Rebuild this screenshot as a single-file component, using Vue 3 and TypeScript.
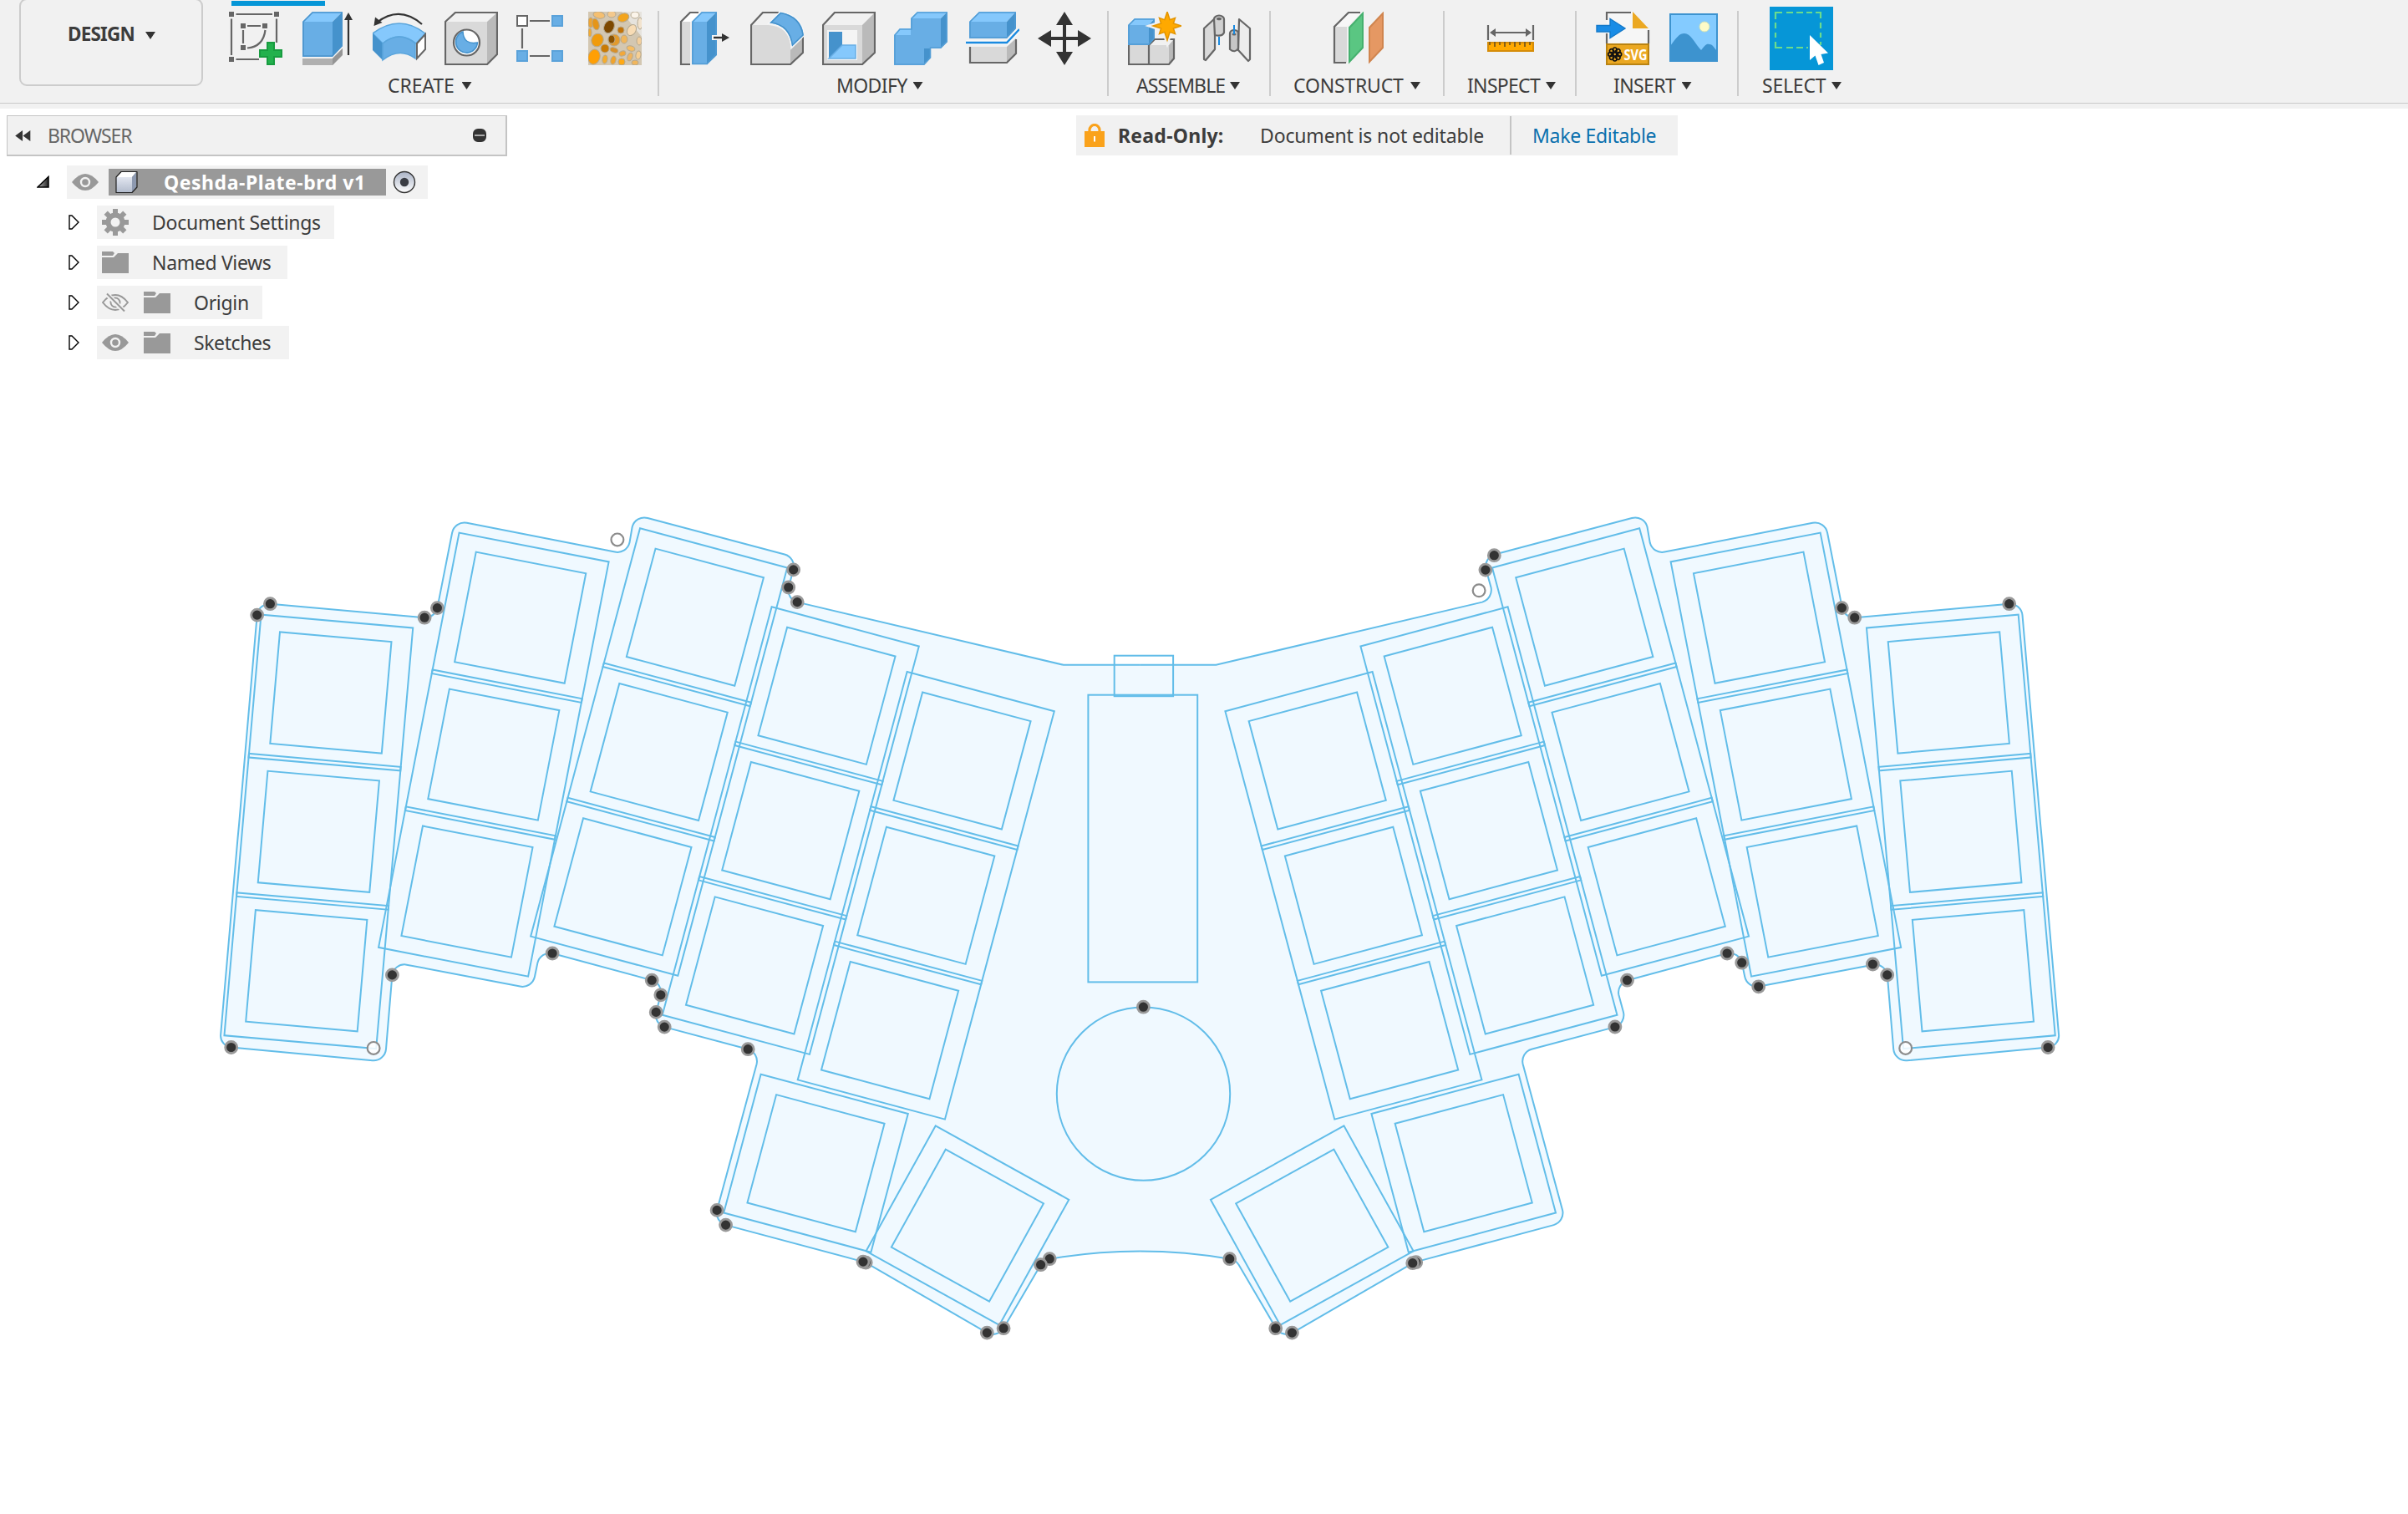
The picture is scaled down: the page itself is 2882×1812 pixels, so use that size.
<script setup lang="ts">
interface Label { text: string; cls: string }
interface Column { x: number; y: number; angle: number; count: number }
interface Key { x: number; y: number; angle: number }
type Point = [number, number]

const labels: Record<string, Label> = {
  create: { text: 'CREATE', cls: 'lb-create' },
  modify: { text: 'MODIFY', cls: 'lb-modify' },
  assemble: { text: 'ASSEMBLE', cls: 'lb-assemble' },
  construct: { text: 'CONSTRUCT', cls: 'lb-construct' },
  inspect: { text: 'INSPECT', cls: 'lb-inspect' },
  insert: { text: 'INSERT', cls: 'lb-insert' },
  select: { text: 'SELECT', cls: 'lb-select' },
}

/* Sketch geometry: the left half is described, the right half is its mirror. */
const AXIS = 1363.7
const PITCH = 167
const columns: Column[] = [
  { x: 395.5, y: 828.6, angle: 5, count: 3 },
  { x: 622.3, y: 738.8, angle: 11, count: 3 },
  { x: 831.5, y: 738.3, angle: 15, count: 3 },
  { x: 989.1, y: 832.4, angle: 15, count: 3 },
  { x: 1151.1, y: 910.1, angle: 15, count: 3 },
  { x: 976.1, y: 1391.8, angle: 15, count: 1 },
  { x: 1157.5, y: 1466.2, angle: 29, count: 1 },
]
const keys: Key[] = columns.flatMap((c) =>
  Array.from({ length: c.count }, (_, i) => {
    const a = (c.angle * Math.PI) / 180
    return { x: c.x - Math.sin(a) * PITCH * i, y: c.y + Math.cos(a) * PITCH * i, angle: c.angle }
  }),
)

const half = [
  'M1363.7 795.4 L1272.4 795.4 L953.8 720.2 A15 15 0 0 1 943.3 702.6 L949.2 681.5',
  'A15 15 0 0 0 938.6 663.1 L774.7 619.6 A15 15 0 0 0 756.3 630.1 L753 649.4',
  'A15 15 0 0 1 735.6 660.2 L558.3 625.4 A15 15 0 0 0 540.7 637.3 L523 727.2',
  'A15 15 0 0 1 507.7 738.8 L323 722.3 A15 15 0 0 0 307.3 735.7 L285.7 986 L284 1004',
  'L263.7 1238.4 A14 14 0 0 0 276.3 1253.1 L445.4 1268.9 A15 15 0 0 0 461.6 1255.3',
  'L469 1166.5 A15 15 0 0 1 485 1154 L622 1180.2 A15 15 0 0 0 639.6 1168.4 L643 1152',
  'A15 15 0 0 1 660.7 1140.6 L779.8 1172.8 A15 15 0 0 1 790.4 1190.4 L784.8 1211',
  'A15 15 0 0 0 794.8 1228.7 L894.8 1255.3 A15 15 0 0 1 905.2 1273 L857.7 1448',
  'A15 15 0 0 0 868.2 1465.7 L1032.6 1509.7 L1035.8 1510.7 L1180.9 1594.7',
  'A15 15 0 0 0 1200.7 1589.3 L1245.2 1513.3 A15 15 0 0 1 1255.8 1506.3',
  'A632 632 0 0 1 1363.7 1497',
].join(' ')

const dots: Point[] = [
  [323, 722.3], [307.3, 735.7], [507.7, 738.8], [523, 727.2], [949.2, 681.5], [943.3, 702.6],
  [953.8, 720.2], [276.3, 1253.1], [469, 1166.5], [660.7, 1140.6], [779.8, 1172.8],
  [790.4, 1190.4], [784.8, 1211], [794.8, 1228.7], [894.8, 1255.3], [857.7, 1448],
  [868.2, 1465.7], [1035.8, 1510.7], [1032.6, 1509.7], [1180.9, 1594.7], [1200.7, 1589.3],
  [1255.8, 1506.3], [1245.2, 1513.3], [1368, 1204.8], [1471.3, 1506.3],
  [1787.9, 664.3], [1777.5, 681.7], [1947.1, 1172.8], [1932.5, 1228.6], [2204, 727.2],
  [2219.3, 738.8], [2404.3, 722.3], [2066.7, 1140.6], [2084.3, 1151.8], [2104.3, 1180.4],
  [2241, 1153.6], [2258.3, 1166.5], [2450.7, 1253.1], [1526.3, 1589.3], [1546, 1594.7],
  [1694.3, 1510.3], [1690.3, 1511.3],
]
const centers: Point[] = [[738.5, 645.5], [446.7, 1254], [1769.7, 706.3], [2280.3, 1254]]
const mirror = `translate(${AXIS * 2} 0) scale(-1 1)`

/* Cells of the volumetric lattice thumbnail: cx, cy, rx, ry, rotation, colour. */
const cells: [number, number, number, number, number, string][] = [
  [13, 4, 7, 4, 10, '#f5bf70'], [28, 3, 5, 4, 0, '#f3c88c'], [42, 7, 7, 5, -20, '#f3a41c'],
  [56, 4, 5, 4, 0, '#fbf4ea'], [3, 13, 3, 6, 0, '#eda433'], [9, 15, 4, 7, -15, '#e59519'],
  [25, 18, 6, 8, 25, '#7d4800'], [39, 22, 4, 4, 0, '#c27308'], [52, 22, 5, 7, 30, '#f8dcb5'],
  [62, 14, 3, 7, 0, '#f2e3ce'], [11, 34, 7, 8, 25, '#f09b0c'], [2, 25, 2, 5, 0, '#f2ab33'],
  [31, 34, 7, 7, 0, '#e29a2c'], [28, 33, 4, 5, 0, '#8b5200'], [43, 33, 4, 5, 0, '#f0b65c'],
  [20, 44, 5, 5, 0, '#c97a05'], [31, 46, 5, 3, 20, '#d8902a'], [7, 54, 7, 9, 15, '#ff9f05'],
  [51, 44, 5, 3, 15, '#f7bd62'], [61, 35, 3, 5, 0, '#f3cf9d'], [20, 57, 3, 5, 10, '#f5ac2e'],
  [30, 58, 3, 5, 15, '#f0a32c'], [41, 50, 4, 3, -20, '#f2a83a'], [40, 60, 4, 4, 0, '#ffa915'],
  [50, 54, 3, 5, 20, '#efb561'], [60, 52, 3, 5, 10, '#f6cf94'], [56, 61, 4, 3, 0, '#f1b65c'],
]
const star = Array.from({ length: 16 }, (_, i) => {
  const r = i % 2 ? 8 : i % 4 ? 13.5 : 17
  const a = (i * Math.PI) / 8
  return `${(47 + r * Math.sin(a)).toFixed(1)},${(17 - r * Math.cos(a)).toFixed(1)}`
}).join(' ')
const petals = [0, 45, 90, 135, 180, 225, 270, 315]
</script>

<template>
  <div class="app">
    <header class="toolbar">
      <div class="tab-mark"></div>
      <button class="workspace"><span class="workspace-name">DESIGN</span><i class="caret"></i></button>

      <section class="group g-create">
        <div class="icons">
          <svg viewBox="0 0 64 64" class="ic">
            <g stroke="#666" stroke-width="2.2" fill="none">
              <path d="M8.500 3H52M3 8.500V52M57 8.500V37M8.500 57H36M22 17H38M17 22V38M43.500 22Q41 42 22 43.500" />
            </g>
            <path fill="#666" d="M0 0h6v6H0zM54 0h6v6h-6zM0 54h6v6H0zM14 14h6v6h-6zM40 14h6v6h-6zM14 40h6v6h-6z" />
            <path d="M46 37h8v9h9v8h-9v9h-8v-9h-9v-8h9z" fill="#23b14d" stroke="#189c40" stroke-width="2" />
          </svg>
          <svg viewBox="0 0 64 64" class="ic">
            <path d="M2 56H38L50 44V51L38 64H2z" fill="#b0b0b0" /><path d="M38 56L50 44V52L38 64z" fill="#959595" />
            <path d="M2 12L14 0H50L38 12z" fill="#85c8fc" /><path d="M2 12H38V54H2z" fill="#68aee5" />
            <path d="M38 12L50 0V41L38 54z" fill="#4592cc" />
            <path d="M3 12L14 1H49V41L37.500 53H3z" fill="none" stroke="#4a93cb" stroke-width="1.600" />
            <path d="M57 52V8" stroke="#333" stroke-width="2.200" /><path d="M57 1l5 9H52z" fill="#333" />
          </svg>
          <svg viewBox="0 0 64 64" class="ic">
            <path d="M0 26Q32 2 63 26L52 38Q32 22 12 38z" fill="#85c8fc" stroke="#5aa5dc" stroke-width="1.500" />
            <path d="M0 26L12 38V58L0 46z" fill="#4592cc" />
            <path d="M12 38Q32 22 51 38V56Q32 42 12 58z" fill="#68aee5" stroke="#5aa5dc" stroke-width="1.500" />
            <path d="M53 38L63 27V45L53 56z" fill="#fff" stroke="#666" stroke-width="2" />
            <path d="M59 15Q32 -8 5 13" fill="none" stroke="#333" stroke-width="2.200" /><path d="M1.500 17L3 6.500L11.500 13z" fill="#333" />
          </svg>
          <svg viewBox="0 0 64 64" class="ic">
            <path d="M1 12L13 1H63L51 12z" fill="#f1f1f1" /><path d="M1 12H51V63H1z" fill="#d9d9d9" /><path d="M51 12L63 1V51L51 63z" fill="#bababa" />
            <path d="M1 12L13 1H63V51L51 63H1z" fill="none" stroke="#666" stroke-width="2.200" />
            <circle cx="26.500" cy="37" r="15.500" fill="#fff" stroke="#666" stroke-width="2.200" />
            <path d="M22 24A13 13 0 1 0 39.500 37Q23 40 22 24z" fill="#68aee5" stroke="#4592cc" stroke-width="1.500" />
          </svg>
          <svg viewBox="0 0 64 64" class="ic">
            <path d="M16 11H40M7 20V44M16 53H40" stroke="#666" stroke-width="2.200" />
            <path d="M1 5h12v12H1z" fill="#fff" stroke="#666" stroke-width="2" />
            <path d="M43 5h12v12H43zM1 47h12v12H1zM43 47h12v12H43z" fill="#68aee5" stroke="#5aa2da" stroke-width="2" />
          </svg>
          <svg viewBox="0 0 64 64" class="ic">
            <rect width="64" height="64" fill="#d3c7b2" /><path d="M40 0H64V30z" fill="#e6e3dd" />
            <ellipse v-for="(c, i) in cells" :key="i" :cx="c[0]" :cy="c[1]" :rx="c[2]" :ry="c[3]" :fill="c[5]"
              :transform="`rotate(${c[4]} ${c[0]} ${c[1]})`" stroke="#b5a88f" stroke-width="1" />
          </svg>
        </div>
        <div class="label" :class="labels.create.cls"><span>{{ labels.create.text }}</span><i class="caret"></i></div>
      </section>

      <section class="group g-modify">
        <div class="icons">
          <svg viewBox="0 0 64 64" class="ic">
            <path d="M3 12L14 1H26L15 12z" fill="#fff" /><path d="M3 12H14V63H3z" fill="#d9d9d9" />
            <path d="M14 63H3V12L14 1H24" fill="none" stroke="#666" stroke-width="2.200" />
            <path d="M16 12L28 0H46L34 12z" fill="#85c8fc" /><path d="M16 12H34V63H16z" fill="#68aee5" /><path d="M34 12L46 0V52L34 63.500z" fill="#4592cc" />
            <path d="M17 12L28 1H45V51L34 62.500H17z" fill="none" stroke="#4f9ad3" stroke-width="1.500" />
            <path d="M40 28h12v6H40z" fill="#f6f6f6" /><path d="M42 31H54" stroke="#333" stroke-width="2.400" /><path d="M52 26L61 31L52 36z" fill="#333" />
          </svg>
          <svg viewBox="0 0 64 64" class="ic">
            <path d="M1 16L15 1H35L23 15z" fill="#f1f1f1" />
            <path d="M1 16H22Q48 18 48.500 45L63 31V49L48 63H1z" fill="#d9d9d9" /><path d="M48 46L63 31V49L48 63z" fill="#bababa" />
            <path d="M34 1H15L1 16V63H48L63 49V30" fill="none" stroke="#666" stroke-width="2.200" />
            <path d="M23 13.500L36 .8Q61 5 64 28L50 41.500Q47 16 23 13.500z" fill="#68aee5" stroke="#f6f6f6" stroke-width="3" paint-order="stroke" />
            <path d="M25 13L36.500 1.500Q60 6 63 28L50.500 40Q47 16 25 13z" fill="none" stroke="#4592cc" stroke-width="1.500" />
          </svg>
          <svg viewBox="0 0 64 64" class="ic">
            <path d="M1 16L15 1H63L48 16z" fill="#f1f1f1" /><path d="M1 16H48V63H1z" fill="#d9d9d9" /><path d="M48 16L63 1V49L48 63z" fill="#bababa" />
            <path d="M1 16L15 1H63V49L48 63H1z" fill="none" stroke="#666" stroke-width="2.200" />
            <path d="M6 22H42V58H6z" fill="#f4f4f4" /><path d="M8 24H24V40L8 56z" fill="#4592cc" /><path d="M8 56L24 40H40V56z" fill="#85c8fc" stroke="#68aee5" stroke-width="1.500" />
          </svg>
          <svg viewBox="0 0 64 64" class="ic">
            <path d="M0 28L7 20H20V8L28 0H64L56 8H20V28z" fill="#85c8fc" /><path d="M56 8L64 0V36L56 44zM36 44H44V55L36 64z" fill="#4592cc" />
            <path d="M0 28H20V8H56V44H36V64H0z" fill="#68aee5" />
            <path d="M1 28L7 21H21V8L28 1H63V36L56 43H43.500V55L36 63H1z" fill="none" stroke="#559fd6" stroke-width="1.600" />
          </svg>
          <svg viewBox="0 0 64 64" class="ic">
            <path d="M5 42H49V61H5z" fill="#d9d9d9" /><path d="M49 42L60 32V50L49 61z" fill="#bababa" /><path d="M5 42V61H49L60 50V33" fill="none" stroke="#666" stroke-width="2.200" />
            <path d="M4 12L16 0H60L49 12z" fill="#85c8fc" /><path d="M4 12H49V32H4z" fill="#68aee5" /><path d="M49 12L60 0V20L49 32z" fill="#4592cc" />
            <path d="M5 12L16 1H59V20L49 31H5z" fill="none" stroke="#4f9ad3" stroke-width="1.500" />
            <path d="M0 37H49L64 21" fill="none" stroke="#f8f8f8" stroke-width="6" /><path d="M0 37H49L64 21" fill="none" stroke="#1a8ae0" stroke-width="2.400" />
          </svg>
          <svg viewBox="0 0 64 64" class="ic">
            <path d="M32 12V52M12 32H52" stroke="#333" stroke-width="4" />
            <path fill="#333" d="M32 0L42 16H22zM32 64L42 48H22zM0 32L16 22V42zM64 32L48 22V42z" />
          </svg>
        </div>
        <div class="label" :class="labels.modify.cls"><span>{{ labels.modify.text }}</span><i class="caret"></i></div>
      </section>

      <section class="group g-assemble">
        <div class="icons">
          <svg viewBox="0 0 64 64" class="ic">
            <path d="M1 40H49V63H1z" fill="#d9d9d9" /><path d="M25 40L32 33H55L49 40z" fill="#f1f1f1" /><path d="M49 40L55 33V56L49 63z" fill="#bababa" />
            <path d="M1 40V63H49L55 56V33H32L25 40V63" fill="none" stroke="#666" stroke-width="2.200" />
            <path d="M0 16L8 8H32L25 16z" fill="#85c8fc" /><path d="M0 16H25V40H0z" fill="#68aee5" /><path d="M25 16L32 8V32L25 40z" fill="#4592cc" />
            <path d="M1 16L8 9H31V32L25 39H1z" fill="none" stroke="#4f9ad3" stroke-width="1.500" />
            <polygon :points="star" fill="#f1f1f1" stroke="#f1f1f1" stroke-width="6" /><polygon :points="star" fill="#ffa900" stroke="#e39400" stroke-width="1.500" />
          </svg>
          <svg viewBox="0 0 64 64" class="ic">
            <g stroke="#666" stroke-width="2.200" stroke-linejoin="round">
              <path d="M5 20L18 8V45L7 58L5 57z" fill="#d9d9d9" /><path d="M17 9A6 4.500 0 0 1 29 9V25Q27 30 18 28z" fill="#d0d0d0" />
              <path d="M47 9L60 20V57L58 59L46 46z" fill="#ececec" /><path d="M36 26A5 4 0 0 1 46 26V44Q42 50 36 45z" fill="#c6c6c6" />
            </g>
            <ellipse cx="23" cy="8.500" rx="3" ry="1.800" fill="#666" /><ellipse cx="41" cy="27" rx="2.500" ry="1.600" fill="#666" />
            <path d="M23 30V40M41 16V27" stroke="#1a8ae0" stroke-width="2" />
          </svg>
        </div>
        <div class="label" :class="labels.assemble.cls"><span>{{ labels.assemble.text }}</span><i class="caret"></i></div>
      </section>

      <section class="group g-construct">
        <div class="icons">
          <svg viewBox="0 0 64 64" class="ic">
            <path d="M3 18L20 1H35L18 18z" fill="#f7f7f7" /><path d="M3 18H18V61H3z" fill="#d9d9d9" />
            <path d="M17 61H3V18L20 1H34" fill="none" stroke="#666" stroke-width="2.200" />
            <path d="M21 19L37 2V43L21 60z" fill="#5ac682" stroke="#45b06e" stroke-width="2" /><path d="M45 19L61 2V43L45 60z" fill="#e59863" stroke="#d0854f" stroke-width="2" />
          </svg>
        </div>
        <div class="label" :class="labels.construct.cls"><span>{{ labels.construct.text }}</span><i class="caret"></i></div>
      </section>

      <section class="group g-inspect">
        <div class="icons">
          <svg viewBox="0 0 64 64" class="ic">
            <path d="M5 16V34M59 16V34M10 25H54" stroke="#666" stroke-width="2.200" /><path d="M7 25L14 20V30zM57 25L50 20V30z" fill="#666" />
            <path d="M5 37H59V47H5z" fill="#ffa900" stroke="#d58c08" stroke-width="2" />
            <path d="M7 36V40M13 36V42M19 36V40M25 36V42M31 36V40M37 36V42M43 36V40M49 36V42M55 36V40" stroke="#7b5a1a" stroke-width="1.800" />
          </svg>
        </div>
        <div class="label" :class="labels.inspect.cls"><span>{{ labels.inspect.text }}</span><i class="caret"></i></div>
      </section>

      <section class="group g-insert">
        <div class="icons">
          <svg viewBox="0 0 64 64" class="ic ic-svg">
            <path d="M13 1H44L63 20V39H13z" fill="#f6f6f6" /><path d="M13 10V1H42M13 26V38M63 22V38" fill="none" stroke="#666" stroke-width="2.200" />
            <path d="M44 0L63 20H44z" fill="#eba822" />
            <path d="M1 16.500H17V8.500L35 20L17 31.500V24H1z" fill="#198ce6" stroke="#1479c9" stroke-width="1.400" />
            <path d="M13 39H63V63H13z" fill="#eba822" stroke="#b98312" stroke-width="2" />
            <g fill="none" stroke="#111" stroke-width="1.600">
              <ellipse v-for="p in petals" :key="p" cx="22.700" cy="46" rx="2.400" ry="3" :transform="`rotate(${p} 22.700 51)`" />
            </g>
            <text x="33.500" y="57.500" class="svg-tag" textLength="28" lengthAdjust="spacingAndGlyphs">SVG</text>
          </svg>
          <svg viewBox="0 0 64 64" class="ic">
            <path d="M3 3H59V59H3z" fill="#84cbff" />
            <path d="M3 41C11 30 14 26 20 26C28 26 33 39 40 46C45 40 46 38 50 39C54 39 56 44 59 47V59H3z" fill="#3d93cf" />
            <circle cx="44" cy="18" r="6" fill="#fdfbc8" stroke="#cfe3bb" stroke-width="1" /><path d="M3 3H59V59H3z" fill="none" stroke="#3d93cf" stroke-width="2" />
          </svg>
        </div>
        <div class="label" :class="labels.insert.cls"><span>{{ labels.insert.text }}</span><i class="caret"></i></div>
      </section>

      <section class="group g-select">
        <div class="icons">
          <svg viewBox="0 0 76 76" class="ic-select">
            <rect width="76" height="76" fill="#0696d7" />
            <path d="M7 15V7H15M20 7H28M32 7H40M44 7H51M55 7H61V14M61 19V26M61 31V37M61 42V46M7 19V26M7 31V37M7 42V49H15M20 49H28M32 49H40M44 49H46" fill="none" stroke="#6bdc8d" stroke-width="2.200" />
            <path d="M48 34L70 55.500L61.500 57L65 67L58.500 70L54.500 58.500L48 64z" fill="#fff" />
          </svg>
        </div>
        <div class="label" :class="labels.select.cls"><span>{{ labels.select.text }}</span><i class="caret"></i></div>
      </section>
    </header>

    <main class="workarea">
      <svg class="canvas" viewBox="0 0 2882 1682" width="2882" height="1682">
        <g transform="translate(.4 -129.600)">
          <g class="fill"><path :d="half" /><path :d="half" :transform="mirror" /></g>
          <g class="lines">
            <path :d="half" /><path :d="half" :transform="mirror" />
            <g v-for="side in 2" :key="side" :transform="side === 2 ? mirror : undefined">
              <g v-for="(k, i) in keys" :key="i" :transform="`translate(${k.x} ${k.y}) rotate(${k.angle})`">
                <rect x="-91.200" y="-85.800" width="182.400" height="171.600" /><rect x="-67" y="-67" width="134" height="134" />
              </g>
            </g>
            <rect x="1333.300" y="784.300" width="70.400" height="48.500" />
            <rect x="1302" y="831.300" width="130.800" height="343.700" />
            <circle cx="1368.100" cy="1308.700" r="103.700" />
          </g>
          <g class="dots">
            <circle v-for="(d, i) in dots" :key="i" :cx="d[0]" :cy="d[1]" r="7" />
          </g>
          <g class="centers">
            <circle v-for="(d, i) in centers" :key="i" :cx="d[0]" :cy="d[1]" r="7.400" />
          </g>
        </g>
      </svg>

      <aside class="browser">
        <div class="browser-head">
          <svg class="collapse" viewBox="0 0 20 14"><path d="M0 7L9.500 0V14zM10 7L19.500 0V14z" fill="#333" /></svg>
          <span class="browser-title">BROWSER</span>
          <span class="minus"></span>
        </div>
        <div class="row root">
          <svg class="open" viewBox="0 0 16 16">
            <defs><linearGradient id="fold"><stop offset="0" stop-color="#bbb" /><stop offset="1" stop-color="#222" /></linearGradient></defs>
            <path d="M1 14L14 1.500V14z" fill="url(#fold)" stroke="#000" stroke-width="1.500" />
          </svg>
          <div class="pill">
            <svg class="i32 eye" viewBox="0 0 32 32"><path d="M0 16Q8 6 16 6T32 16Q24 26 16 26T0 16z" fill="#999" /><circle cx="16" cy="16" r="5" fill="none" stroke="#f2f2f2" stroke-width="2.400" /></svg>
            <div class="name">
              <svg class="cube" viewBox="0 0 28 28">
                <defs><linearGradient id="face" x2="0" y2="1"><stop offset="0" stop-color="#e2e6f0" /><stop offset="1" stop-color="#b3bccd" /></linearGradient></defs>
                <path d="M1 8L7 2H25L20 8z" fill="#fff" /><path d="M1 8H20V26H1z" fill="url(#face)" /><path d="M20 8L25 2V20L20 26z" fill="#8d99b0" />
                <path d="M1 8L7 1.500H26V20L20 26.500H1z" fill="none" stroke="#222" stroke-width="1.200" stroke-linejoin="round" />
              </svg>
              <span class="t-root">Qeshda-Plate-brd v1</span>
            </div>
            <svg class="radio" viewBox="0 0 28 28">
              <defs><linearGradient id="knob" x2="0" y2="1"><stop offset="0" stop-color="#aab3c6" /><stop offset="1" stop-color="#fff" /></linearGradient></defs>
              <circle cx="14" cy="14" r="12.500" fill="url(#knob)" stroke="#333" stroke-width="1.400" /><circle cx="14" cy="14" r="5.200" fill="#3a3d45" />
            </svg>
          </div>
        </div>
        <div class="row">
          <svg class="closed" viewBox="0 0 13 18"><path d="M1 1H4L12 9L4 17H1z" fill="#fff" stroke="#000" stroke-width="1.400" /></svg>
          <div class="pill w-settings">
            <svg class="i32" viewBox="0 0 32 32">
              <g fill="#999"><rect v-for="a in [0, 45, 90, 135]" :key="a" x="13" y="0" width="6" height="32" :transform="`rotate(${a} 16 16)`" /><circle cx="16" cy="16" r="11.500" /></g>
              <circle cx="16" cy="16" r="5.500" fill="#f2f2f2" />
            </svg>
            <span class="t-settings">Document Settings</span>
          </div>
        </div>
        <div class="row">
          <svg class="closed" viewBox="0 0 13 18"><path d="M1 1H4L12 9L4 17H1z" fill="#fff" stroke="#000" stroke-width="1.400" /></svg>
          <div class="pill w-views">
            <svg class="i32" viewBox="0 0 32 32"><path d="M0 3H13L15 5L13 8H0zM0 10H14L19 5H32V29H0z" fill="#999" /></svg>
            <span class="t-views">Named Views</span>
          </div>
        </div>
        <div class="row">
          <svg class="closed" viewBox="0 0 13 18"><path d="M1 1H4L12 9L4 17H1z" fill="#fff" stroke="#000" stroke-width="1.400" /></svg>
          <div class="pill w-origin">
            <svg class="i32" viewBox="0 0 32 32">
              <g fill="none" stroke="#999" stroke-width="2"><path d="M1 16Q8 7 16 7T31 16Q24 25 16 25T1 16z" /><circle cx="16" cy="16" r="5.500" /></g>
              <path d="M5 5L27 27" stroke="#f2f2f2" stroke-width="5.500" /><path d="M6 5.500L27 26.500" stroke="#999" stroke-width="2" />
            </svg>
            <svg class="i32" viewBox="0 0 32 32"><path d="M0 3H13L15 5L13 8H0zM0 10H14L19 5H32V29H0z" fill="#999" /></svg>
            <span class="t-origin">Origin</span>
          </div>
        </div>
        <div class="row">
          <svg class="closed" viewBox="0 0 13 18"><path d="M1 1H4L12 9L4 17H1z" fill="#fff" stroke="#000" stroke-width="1.400" /></svg>
          <div class="pill w-sketches">
            <svg class="i32" viewBox="0 0 32 32"><path d="M0 16Q8 6 16 6T32 16Q24 26 16 26T0 16z" fill="#999" /><circle cx="16" cy="16" r="5" fill="none" stroke="#f2f2f2" stroke-width="2.400" /></svg>
            <svg class="i32" viewBox="0 0 32 32"><path d="M0 3H13L15 5L13 8H0zM0 10H14L19 5H32V29H0z" fill="#999" /></svg>
            <span class="t-sketches">Sketches</span>
          </div>
        </div>
      </aside>

      <div class="notice">
        <svg class="lock" viewBox="0 0 24 28"><path d="M6 10V7.500A6 6 0 0 1 18 7.500V10" fill="none" stroke="#faa21b" stroke-width="3.200" /><path d="M0 9H24V28H0z" fill="#faa21b" /><path d="M12 15V21.500" stroke="#fff" stroke-width="2" /></svg>
        <strong class="t-ro">Read-Only:</strong>
        <span class="t-msg">Document is not editable</span>
        <a class="t-make">Make Editable</a>
      </div>
    </main>
  </div>
</template>

<style>
body { margin: 0; background: #fff; }
</style>

<style scoped>
.app { width: 2882px; height: 1812px; overflow: hidden; background: #fff; color: #3c3c3c; font: 23px/30px "Noto Sans", "Open Sans", sans-serif; display: flex; flex-direction: column; }
span, strong, a { white-space: nowrap; }
svg { display: block; flex: none; }

.toolbar { position: relative; flex: none; box-sizing: border-box; height: 130px; display: flex; background: linear-gradient(#c9c9c9, #c9c9c9) 0 123px / 100% 1px no-repeat #f1f1f1; }
.tab-mark { position: absolute; left: 277px; top: 1px; width: 112px; height: 6px; background: #0696d7; }
.workspace { box-sizing: border-box; width: 220px; height: 105px; margin: -2px 0 0 23px; padding: 0 0 0 56px; display: flex; align-items: center; border: 2px solid #ccc; border-radius: 9px; background: #f1f1f1; font: bold 22.5px/30px "Noto Sans", sans-serif; color: #3c3c3c; }
.workspace-name { width: 93px; margin-top: -19px; text-align: left; letter-spacing: -.8px; }
.workspace .caret { margin-top: -16px; }
.caret { flex: none; width: 12px; height: 9px; background: #333; clip-path: polygon(0 0, 100% 0, 50% 100%); }

.group { position: relative; flex: none; height: 130px; box-sizing: border-box; }
.group + .group::before { content: ""; position: absolute; left: 0; top: 13px; width: 2px; height: 102px; background: #ccc; }
.icons { display: flex; gap: 22px; padding-top: 14px; }
.ic { width: 64px; height: 64px; }
.ic-svg { overflow: visible; }
.ic-select { width: 76px; height: 76px; margin: -6px 0 -6px; }
.label { display: flex; height: 30px; margin-top: 9px; }
.label .caret { margin: 11px 0 0 6px; }
.g-create { width: 544px; } .g-create .icons { padding-left: 31px; }
.g-modify { width: 538px; } .g-modify .icons { padding-left: 25px; }
.g-assemble { width: 194px; } .g-assemble .icons { padding-left: 25px; }
.g-construct { width: 208px; } .g-construct .icons { padding-left: 75px; }
.g-inspect { width: 158px; } .g-inspect .icons { padding-left: 49px; }
.g-insert { width: 194px; } .g-insert .icons { padding-left: 25px; }
.g-select { width: 160px; } .g-select .icons { padding-left: 39px; }
.lb-create { padding-left: 221px; } .lb-create span { width: 82.5px; letter-spacing: -.1px; }
.lb-modify { padding-left: 214px; } .lb-modify span { width: 85.500px; letter-spacing: -.6px; }
.lb-assemble { padding-left: 35px; } .lb-assemble span { width: 106px; letter-spacing: -.9px; }
.lb-construct { padding-left: 29px; } .lb-construct span { width: 134px; letter-spacing: -.2px; }
.lb-inspect { padding-left: 29px; } .lb-inspect span { width: 88px; letter-spacing: -.7px; }
.lb-insert { padding-left: 46px; } .lb-insert span { width: 75.5px; letter-spacing: -.6px; }
.lb-select { padding-left: 30px; } .lb-select span { width: 77px; letter-spacing: -.2px; }
.svg-tag { font: bold 18px "Open Sans", sans-serif; fill: #fff; }

.workarea { position: relative; flex: 1; display: flex; align-items: flex-start; }
.canvas { position: absolute; left: 0; top: 0; }
.fill { fill: #f0f9ff; }
.lines { fill: none; stroke: #62bde9; stroke-width: 2; }
.dots { fill: #333; stroke: #999; stroke-width: 2.8; }
.centers { fill: rgba(255, 255, 255, .85); stroke: #8c8c8c; stroke-width: 2.2; }

.browser { position: relative; width: 600px; padding: 8px 0 0 8px; }
.browser-head { box-sizing: border-box; width: 599px; height: 49px; margin-bottom: 11px; display: flex; align-items: center; padding-left: 9px; border: 1px solid #c4c4c4; border-width: 1px 2px 2px 1px; background: #f1f1f1; color: #666; }
.collapse { width: 19px; height: 13px; }
.browser-title { width: 509px; margin-left: 20px; letter-spacing: -1.1px; }
.minus { box-sizing: border-box; width: 16px; height: 16px; border-radius: 6px; border: solid #333; border-width: 7px 2px; background: #aaa; }
.row { height: 40px; margin-bottom: 8px; display: flex; align-items: center; padding-left: 74px; }
.root { padding-left: 36px; }
.closed { width: 13px; height: 18px; margin-right: 21px; }
.open { width: 16px; height: 16px; margin-right: 20px; }
.pill { box-sizing: border-box; height: 40px; padding-left: 6px; display: flex; align-items: center; background: #f2f2f2; }
.root .pill { width: 432px; }
.w-settings { width: 284px; } .w-views { width: 228px; } .w-origin { width: 198px; } .w-sketches { width: 230px; }
.i32 { width: 32px; height: 32px; }
.i32 + .i32 { margin-left: 18px; }
.pill > span { margin-left: 28px; }
.t-settings { letter-spacing: -.27px; } .t-views { letter-spacing: -.35px; } .t-origin { letter-spacing: -.3px; } .t-sketches { letter-spacing: -.4px; }
.name { width: 332px; height: 32px; margin-left: 12px; display: flex; align-items: center; background: #999; color: #fff; font-weight: bold; }
.t-root { letter-spacing: .55px; }
.cube { width: 28px; height: 28px; margin: 0 30px 0 8px; }
.radio { width: 28px; height: 28px; margin-left: 8px; }

.notice { position: absolute; left: 1288px; top: 8px; box-sizing: border-box; width: 720px; height: 48px; display: flex; align-items: center; padding-left: 10px; background: #f1f1f1; }
.lock { width: 24px; height: 28px; margin-right: 16px; }
.t-ro { width: 170px; letter-spacing: .25px; }
.t-msg { width: 299px; letter-spacing: -.15px; }
.t-make { height: 46px; line-height: 46px; padding-left: 25px; border-left: 2px solid #c4c4c4; color: #0a70ae; letter-spacing: -.3px; }
</style>
